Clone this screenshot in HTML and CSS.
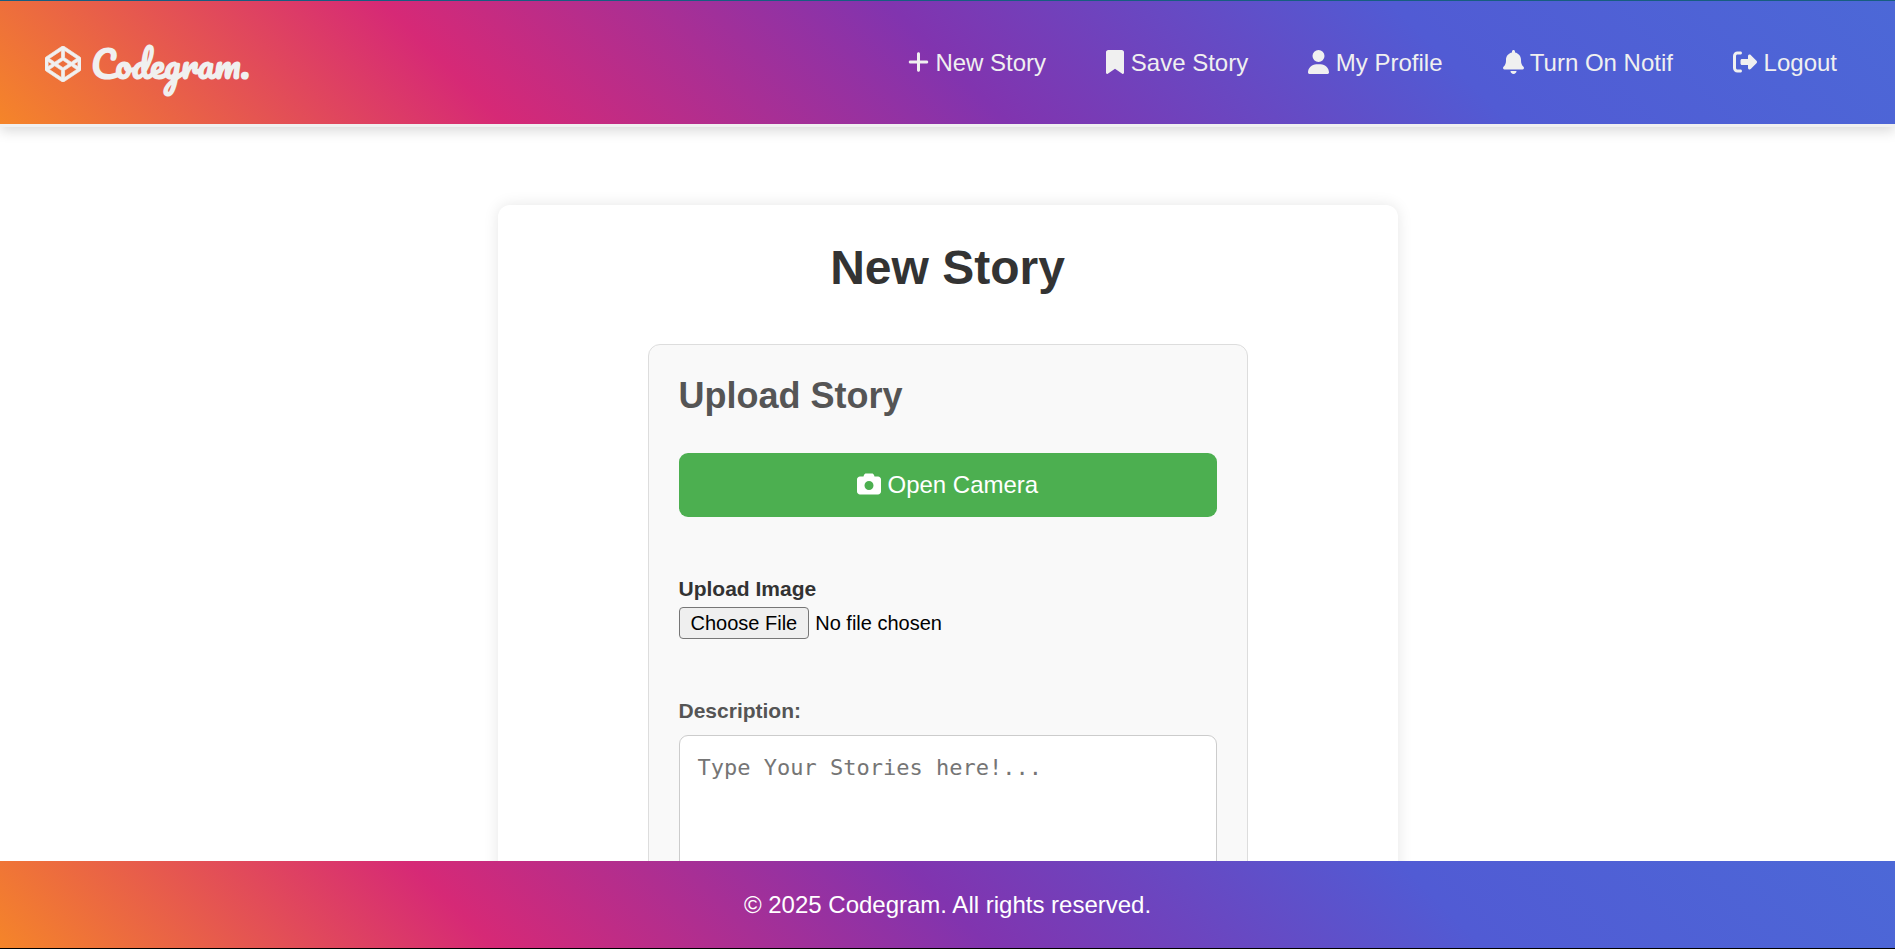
FILE: index.html
```html
<!DOCTYPE html>
<html lang="en">
<head>
<meta charset="utf-8">
<meta name="viewport" content="width=device-width, initial-scale=1">
<title>Codegram - New Story</title>
<link rel="stylesheet" href="styles.css">
</head>
<body>
<header class="site-header">
  <a class="brand" href="#">
    <svg class="brand-icon" viewBox="0 0 512 512" aria-hidden="true"><path d="M502.285 159.704l-234-156c-7.987-4.915-16.511-4.96-24.571 0l-234 156C3.714 163.703 0 170.847 0 177.989v155.999c0 7.143 3.714 14.286 9.715 18.286l234 156.022c7.987 4.915 16.511 4.96 24.571 0l234-156.022c6-3.999 9.715-11.143 9.715-18.286V177.989c-.001-7.142-3.715-14.286-9.716-18.285zM278 63.131l172.286 114.858-76.857 51.429L278 165.703V63.131zm-44 0v102.572l-95.429 63.715-76.857-51.429L234 63.131zM44 219.132l55.143 36.857L44 292.847v-73.715zm190 229.715L61.714 333.989l76.857-51.429L234 346.275v102.572zm22-140.858l-77.715-52 77.715-52 77.715 52-77.715 52zm22 140.858V346.275l95.429-63.715 76.857 51.429L278 448.847zm190-156l-55.143-36.857L468 219.132v73.715z"/></svg>
    <span class="brand-name">Codegram.</span>
  </a>
  <nav class="main-nav" aria-label="Main">
    <a href="#"><svg class="icon" viewBox="0 0 448 512" aria-hidden="true"><path d="M256 80c0-17.700-14.300-32-32-32s-32 14.300-32 32V224H48c-17.700 0-32 14.300-32 32s14.300 32 32 32H192V432c0 17.700 14.300 32 32 32s32-14.300 32-32V288H400c17.700 0 32-14.300 32-32s-14.300-32-32-32H256V80z"/></svg> New Story</a>
    <a href="#"><svg class="icon" viewBox="0 0 384 512" aria-hidden="true"><path d="M0 48V487.700C0 501.100 10.900 512 24.300 512c5 0 9.900-1.500 14-4.400L192 400 345.700 507.600c4.100 2.900 9 4.400 14 4.400c13.400 0 24.300-10.900 24.300-24.300V48c0-26.500-21.500-48-48-48H48C21.500 0 0 21.500 0 48z"/></svg> Save Story</a>
    <a href="#"><svg class="icon" viewBox="0 0 448 512" aria-hidden="true"><path d="M224 256A128 128 0 1 0 224 0a128 128 0 1 0 0 256zm-45.700 48C79.800 304 0 383.800 0 482.300C0 498.700 13.300 512 29.700 512H418.300c16.400 0 29.700-13.300 29.700-29.700C448 383.800 368.200 304 269.700 304H178.300z"/></svg> My Profile</a>
    <a href="#"><svg class="icon" viewBox="0 0 448 512" aria-hidden="true"><path d="M224 0c-17.700 0-32 14.300-32 32V51.200C119 66 64 130.600 64 208v18.800c0 47-17.300 92.400-48.500 127.600l-7.400 8.300c-8.400 9.400-10.400 22.900-5.300 34.400S19.400 416 32 416H416c12.600 0 24-7.400 29.200-18.900s3.100-25-5.300-34.400l-7.400-8.300C401.300 319.200 384 273.900 384 226.800V208c0-77.400-55-142-128-156.800V32c0-17.700-14.300-32-32-32zm45.300 493.300c12-12 18.700-28.300 18.700-45.300H224 160c0 17 6.700 33.300 18.700 45.300s28.300 18.700 45.300 18.700s33.300-6.700 45.300-18.700z"/></svg> Turn On Notif</a>
    <a href="#"><svg class="icon" viewBox="0 0 512 512" aria-hidden="true"><path d="M377.900 105.900L500.700 228.700c7.200 7.200 11.300 17.100 11.300 27.300s-4.100 20.100-11.300 27.300L377.900 406.100c-6.400 6.400-15 9.900-24 9.900c-18.700 0-33.900-15.200-33.900-33.900l0-62.100-128 0c-17.700 0-32-14.300-32-32l0-64c0-17.700 14.300-32 32-32l128 0 0-62.100c0-18.700 15.200-33.900 33.900-33.900c9 0 17.600 3.600 24 9.900zM160 96L96 96c-17.700 0-32 14.300-32 32l0 256c0 17.700 14.300 32 32 32l64 0c17.700 0 32 14.300 32 32s-14.300 32-32 32l-64 0c-53 0-96-43-96-96L0 128C0 75 43 32 96 32l64 0c17.700 0 32 14.300 32 32s-14.300 32-32 32z"/></svg> Logout</a>
  </nav>
</header>

<main class="content">
  <section class="card">
    <h1 class="card-title">New Story</h1>
    <form class="story-form">
      <h2 class="form-title">Upload Story</h2>
      <button class="camera-button" type="button"><svg class="icon" viewBox="0 0 512 512" aria-hidden="true"><path d="M149.100 64.800L138.700 96H64C28.700 96 0 124.700 0 160V416c0 35.300 28.700 64 64 64H448c35.300 0 64-28.700 64-64V160c0-35.300-28.700-64-64-64H373.300L362.900 64.800C356.400 45.200 338.100 32 317.400 32H194.600c-20.700 0-39 13.200-45.500 32.800zM256 192a96 96 0 1 1 0 192 96 96 0 1 1 0-192z"/></svg> Open Camera</button>
      <div class="field">
        <label class="image-label" for="image">Upload Image</label>
        <input class="file-input" type="file" id="image" name="image">
      </div>
      <div class="field">
        <label class="text-label" for="description">Description:</label>
        <textarea class="description" id="description" name="description" rows="6" placeholder="Type Your Stories here!..."></textarea>
      </div>
    </form>
  </section>
</main>

<footer class="site-footer">
  <p>© 2025 Codegram. All rights reserved.</p>
</footer>
</body>
</html>
```
FILE: styles.css
```css
:root {
  --brand-gradient: linear-gradient(45deg, #f58529, #d62976, #8134af, #515bd4, #4c68d7);
}

* {
  box-sizing: border-box;
}

body {
  display: flex;
  flex-direction: column;
  height: 100vh;
  margin: 0;
  background: #fff;
  color: #333;
  font-family: Arial, "Liberation Sans", sans-serif;
  font-size: 24px;
}

h1,
h2,
p {
  margin: 0;
}

.icon {
  height: 24px;
  vertical-align: -3px;
  fill: currentColor;
}

.site-header {
  position: relative;
  z-index: 1;
  display: flex;
  flex: none;
  align-items: flex-start;
  justify-content: space-between;
  padding: 36px 58px 33px 45px;
  border-top: 1px solid #175d80;
  border-bottom: 3px solid #f0f0f0;
  background: var(--brand-gradient);
  box-shadow: 0 4px 12px rgba(0, 0, 0, 0.15);
}

.brand {
  display: flex;
  align-items: center;
  gap: 10px;
  color: #f0f0f0;
  text-decoration: none;
}

.brand-icon {
  width: 36px;
  height: 36px;
  fill: currentColor;
  stroke: currentColor;
  stroke-width: 10;
}

.brand-name {
  font-family: Pacifico, cursive;
  font-size: 36px;
  font-weight: bold;
  line-height: 54px;
}

.main-nav {
  display: flex;
  gap: 60px;
  padding-top: 12px;
}

.main-nav a {
  color: #f0f0f0;
  line-height: 28px;
  text-decoration: none;
  white-space: nowrap;
}

.content {
  flex: 1;
  min-height: 0;
  overflow-y: auto;
  scrollbar-width: none;
  padding: 78px 24px;
}

.card {
  max-width: 900px;
  margin: 0 auto;
  padding: 35px 30px;
  border-radius: 12px;
  background: #fff;
  box-shadow: 0 0 15px rgba(0, 0, 0, 0.1);
}

.card-title {
  font-size: 48px;
  line-height: 56px;
  text-align: center;
}

.story-form {
  max-width: 600px;
  margin: 48px auto 0;
  padding: 30px;
  border: 1px solid #ddd;
  border-radius: 12px;
  background: #f9f9f9;
}

.form-title {
  margin-bottom: 36px;
  color: #555;
  font-size: 36px;
  line-height: 42px;
}

.camera-button {
  display: block;
  width: 100%;
  padding: 18px;
  border: 0;
  border-radius: 9px;
  background: #4caf50;
  color: #fff;
  font: inherit;
  line-height: 28px;
}

.field {
  display: flex;
  flex-direction: column;
  margin-top: 60px;
}

.image-label,
.text-label {
  font-size: 21px;
  font-weight: bold;
  line-height: 24px;
}

.image-label {
  margin-bottom: 6px;
}

.text-label {
  margin-bottom: 12px;
  color: #555;
}

.file-input {
  color: #000;
  font-family: inherit;
  font-size: 20px;
}

.file-input::file-selector-button {
  height: 32px;
  margin-right: 6px;
  padding: 0 11px;
  border: 1px solid #767676;
  border-radius: 4px;
  background: #efefef;
  color: #000;
  font: inherit;
}

.description {
  width: 100%;
  padding: 18px;
  border: 1px solid #ccc;
  border-radius: 9px;
  background: #fff;
  font-family: Consolas, "DejaVu Sans Mono", monospace;
  font-size: 22px;
  line-height: 28px;
  resize: vertical;
}

.description::placeholder {
  color: #757575;
}

.site-footer {
  position: relative;
  z-index: 1;
  flex: none;
  padding: 30px;
  border-bottom: 1px solid #000;
  background: var(--brand-gradient);
  color: #fff;
  line-height: 27px;
  text-align: center;
}
```
